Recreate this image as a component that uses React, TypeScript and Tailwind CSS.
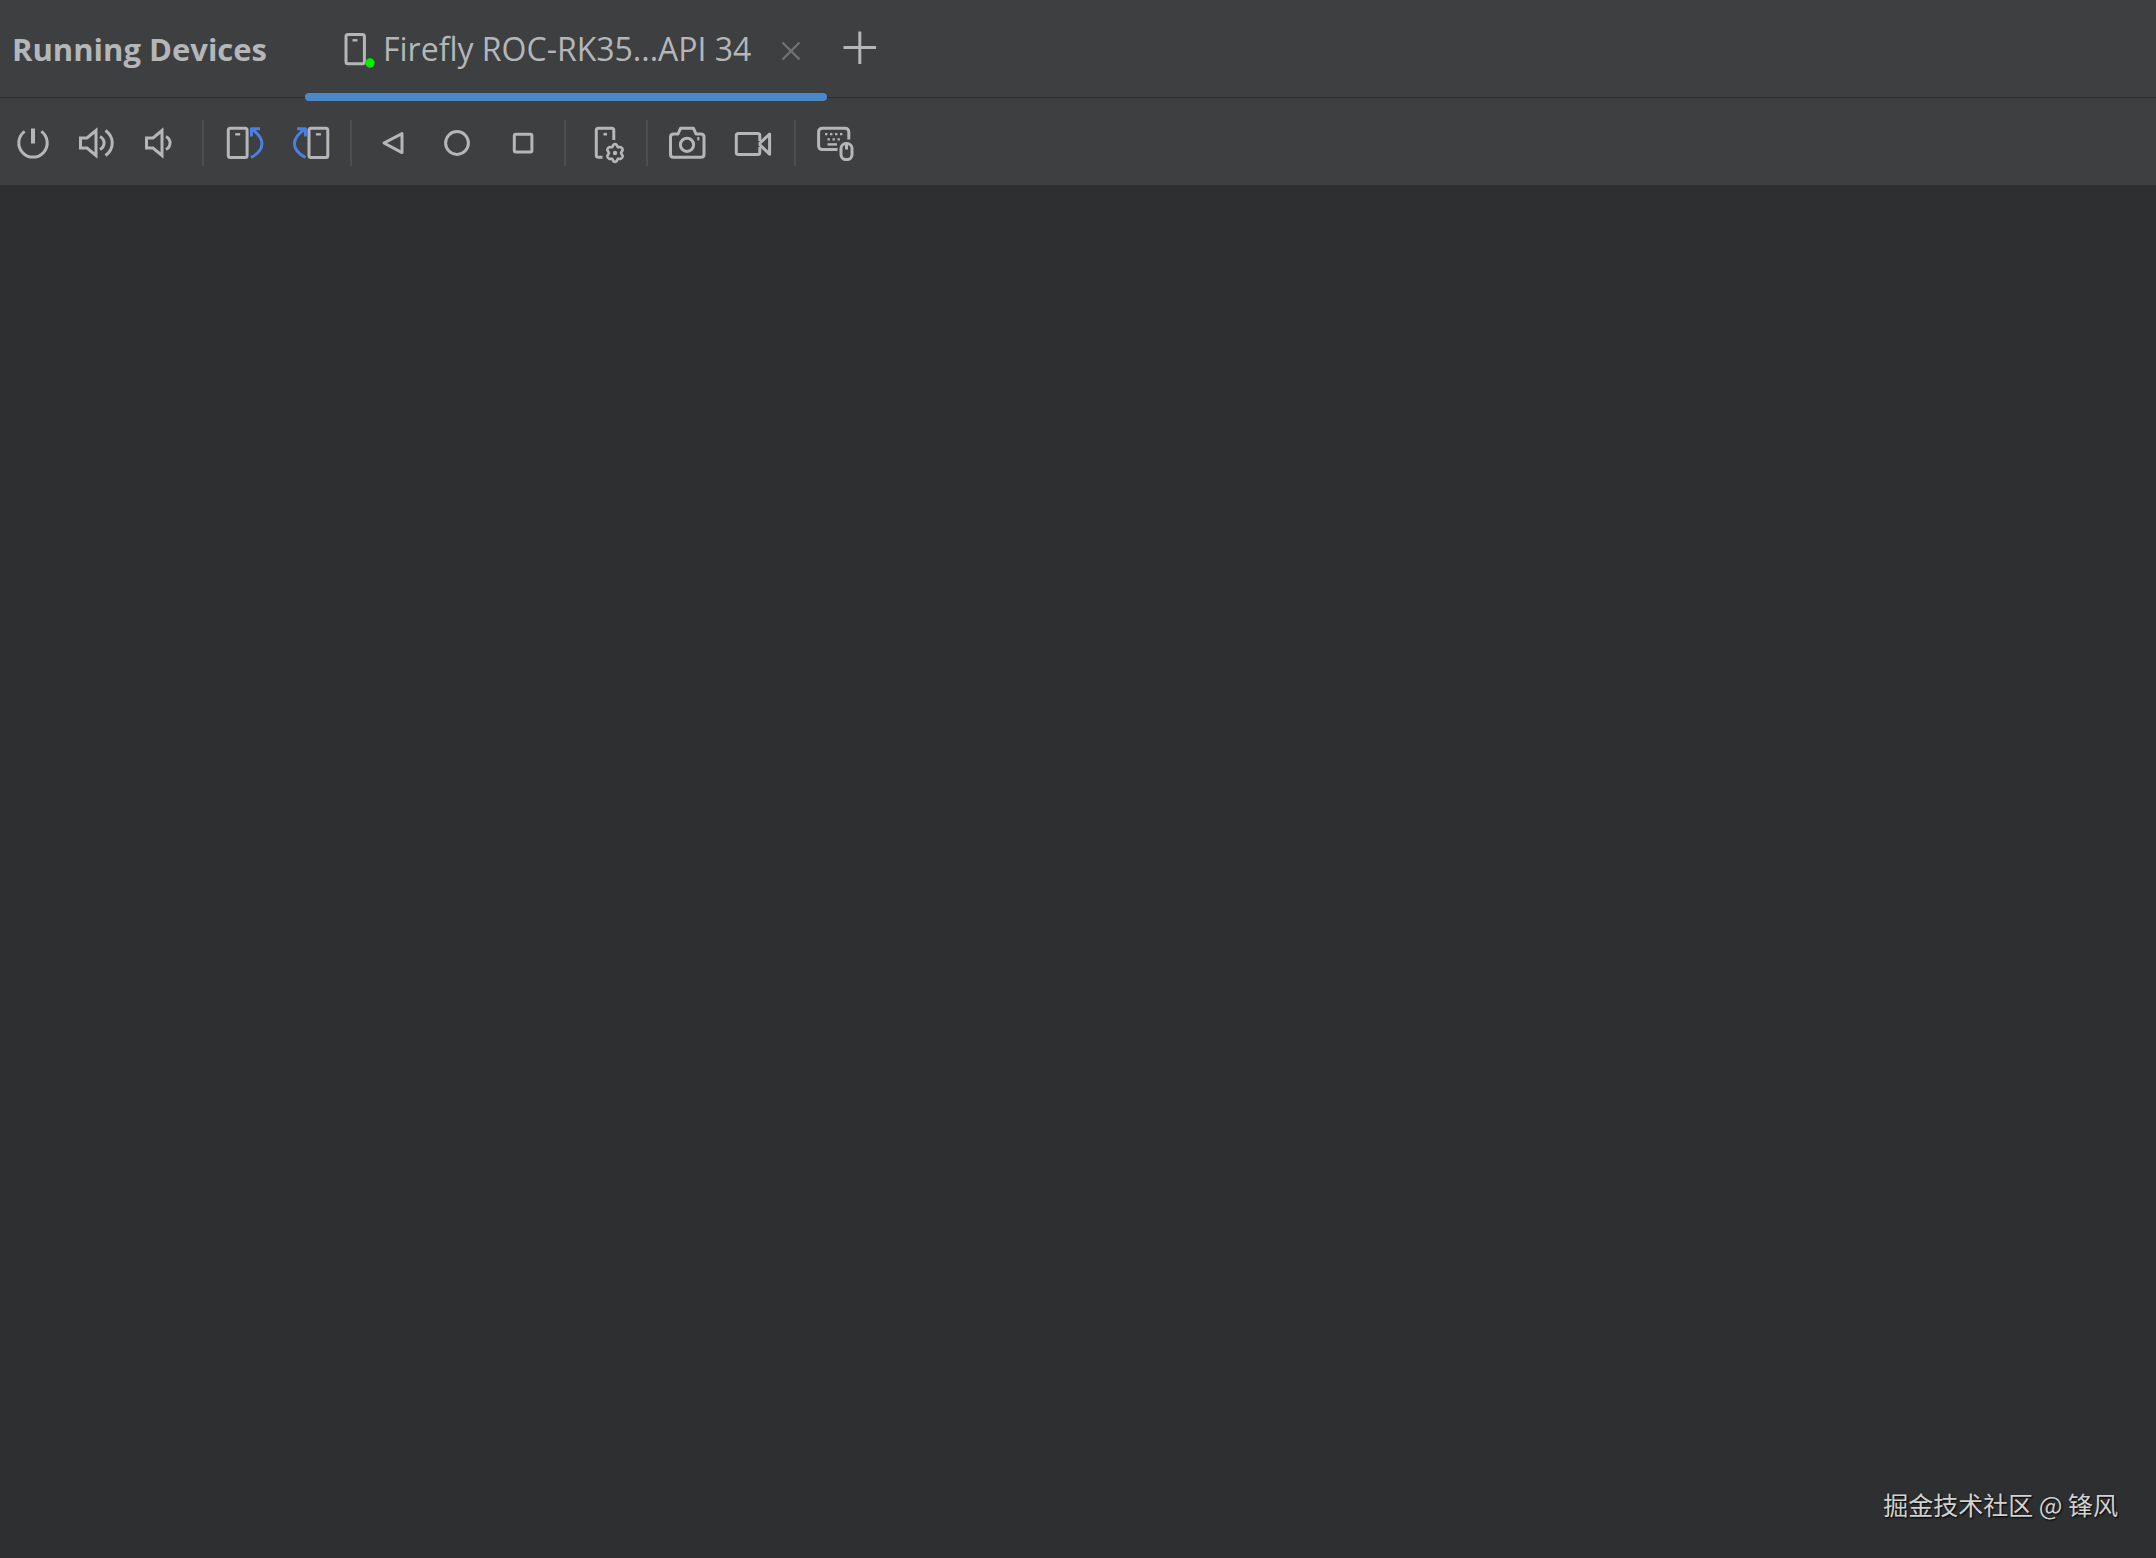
import type { ReactNode } from 'react';

type IconProps = {
  children: ReactNode;
};

function Icon({ children }: IconProps) {
  return (
    <svg
      viewBox="0 0 36 36"
      className="size-9 shrink-0 overflow-visible"
      fill="none"
      stroke="currentColor"
      strokeWidth="3"
      strokeLinejoin="round"
      aria-hidden="true"
    >
      {children}
    </svg>
  );
}

const speaker = <path d="M2.5 13H9L18 5.5V30.5L9 23H2.5Z" strokeLinejoin="miter" />;

const groups: Array<Array<{ label: string; icon: ReactNode }>> = [
  [
    {
      label: 'Power',
      icon: (
        <>
          <path d="M12.7 6.4A14.2 14.2 0 1 0 29.3 6.4" />
          <path d="M21 3.5V18.5" strokeWidth="4" />
        </>
      ),
    },
    {
      label: 'Volume Up',
      icon: (
        <>
          {speaker}
          <path d="M22 11.5C27.4 14.5 27.4 21.5 22 24.5M27.5 5.5C36.5 12 36.5 24 27.5 30.5" />
        </>
      ),
    },
    {
      label: 'Volume Down',
      icon: (
        <>
          {speaker}
          <path d="M22 11.5C27.4 14.5 27.4 21.5 22 24.5" />
        </>
      ),
    },
  ],
  [
    {
      label: 'Rotate Left',
      icon: (
        <>
          <rect x="2.3" y="3.3" width="18.8" height="29.2" rx="2" />
          <path d="M9.2 9.3H14.2" strokeWidth="2.4" />
          <path d="M34 3.8H25.4V11.5M25.5 4C39.5 13 39.5 25 25 32.5" stroke="#4a80e4" />
        </>
      ),
    },
    {
      label: 'Rotate Right',
      icon: (
        <>
          <rect x="17" y="3.3" width="18.8" height="29.2" rx="2" />
          <path d="M23.9 9.3H28.9" strokeWidth="2.4" />
          <path d="M5 3.8H13.4V11.5M13.3 4C-1.2 13 -1.2 25 13.5 32.5" stroke="#4a80e4" />
        </>
      ),
    },
  ],
  [
    { label: 'Back', icon: <path d="M10 18L28 8.6V27.6Z" /> },
    { label: 'Home', icon: <circle cx="17" cy="18" r="11.4" /> },
    { label: 'Overview', icon: <rect x="8.3" y="9.2" width="17.6" height="17.8" rx="1.5" /> },
  ],
  [
    {
      label: 'Device UI Settings',
      icon: (
        <>
          <path d="M25.8 15V5.3Q25.8 3.3 23.8 3.3H10.3Q8.3 3.3 8.3 5.3V30.3Q8.3 32.3 10.3 32.3H14.5" />
          <path d="M15.5 9.2H19" strokeWidth="2.6" />
          <path
            d="M25.4 19.8Q27 18.6 28.6 19.8L29.8 22.2L32.8 22.1Q34.8 23.2 34.7 25L33 28L34.7 31Q34.8 32.8 32.8 33.9L29.8 33.8L28.6 36.2Q27 37.4 25.4 36.2L24.2 33.8L21.2 33.9Q19.2 32.8 19.3 31L21 28L19.3 25Q19.2 23.2 21.2 22.1L24.2 22.2Z"
            strokeWidth="2.6"
          />
          <circle cx="27" cy="28" r="2.2" fill="currentColor" stroke="none" />
        </>
      ),
    },
  ],
  [
    {
      label: 'Take Screenshot',
      icon: (
        <>
          <path d="M8 9L10.5 3.3H23.5L26 9H31Q34 9 34 12V29.3Q34 32.3 31 32.3H3.5Q.5 32.3 .5 29.3V12Q.5 9 3.5 9Z" />
          <circle cx="17" cy="19.8" r="6.6" />
          <path d="M28.3 12V15.4" strokeWidth="2" />
        </>
      ),
    },
    {
      label: 'Record Screen',
      icon: (
        <>
          <path d="M23.8 16V10.5Q23.8 8.5 21.8 8.5H2.3Q.3 8.5 .3 10.5V27.5Q.3 29.5 2.3 29.5H21.8Q23.8 29.5 23.8 27.5V22" />
          <path d="M24 18L33.6 9V29.2L24 20Z" />
        </>
      ),
    },
  ],
  [
    {
      label: 'Hardware Input',
      icon: (
        <>
          <path d="M19.5 24.5H4.6Q.6 24.5 .6 20.5V7.3Q.6 3.3 4.6 3.3H26.8Q30.8 3.3 30.8 7.3V14.5" />
          <path d="M7 9.2H9.4M12 9.2H14.4M17 9.2H19.4M22 9.2H24.4M9.5 14.3H11.9M14.5 14.3H16.9M19.5 14.3H21.9" strokeWidth="2.2" />
          <path d="M9.5 19.4H19" strokeWidth="2.4" />
          <rect x="23" y="18.6" width="11" height="16" rx="5" />
          <path d="M28.5 18.6V24.5" />
        </>
      ),
    },
  ],
];

function TabBar() {
  return (
    <header className="flex h-[98px] items-stretch border-b border-[#2c2e30]">
      <h1 className="w-[305px] shrink-0 pl-3 pt-[27px] text-[31px] leading-[44px] font-bold">
        Running Devices
      </h1>
      <div className="relative flex w-[522px] shrink-0 items-start pl-[38px] pt-[27px]">
        <button type="button" className="flex gap-1 whitespace-nowrap">
          <span className="mt-[5px]">
            <Icon>
              <rect x="3" y="2.6" width="18.4" height="29.2" rx="2" />
              <path d="M9.5 8.3H14.5" strokeWidth="2.4" />
              <circle cx="27" cy="31" r="4.7" fill="#00ee00" stroke="none" />
            </Icon>
          </span>
          <span className="text-[32px] leading-[44px]">Firefly ROC-RK35...API 34</span>
        </button>
        <button type="button" aria-label="Close tab" className="ml-auto mr-[18px] mt-[5px] text-[#6f7173]">
          <Icon>
            <path d="M9.5 10.5L26.5 27.5M26.5 10.5L9.5 27.5" strokeWidth="2.4" />
          </Icon>
        </button>
        <span className="absolute inset-x-0 -bottom-1 h-2 rounded-full bg-[#4a88c7]" />
      </div>
      <button type="button" aria-label="New tab" className="ml-[15px] mt-[29px] self-start">
        <Icon>
          <path d="M1.5 18.5H34M17.8 2.5V35" />
        </Icon>
      </button>
    </header>
  );
}

function Toolbar() {
  return (
    <div role="toolbar" aria-label="Device controls" className="flex pl-3 pt-[22px] pb-[19px]">
      {groups.map((group, index) => (
        <div key={group[0].label} className="flex items-center">
          {index > 0 && <span className="mx-[22px] h-[46px] w-[2px] bg-[#4b4d4f]" />}
          <div className="flex gap-[30px]">
            {group.map(({ label, icon }) => (
              <button key={label} type="button" aria-label={label}>
                <Icon>{icon}</Icon>
              </button>
            ))}
          </div>
        </div>
      ))}
    </div>
  );
}

export default function App() {
  return (
    <div className="flex min-h-screen flex-col bg-[#2e2f31] font-['Open_Sans','Noto_Sans_CJK_SC',sans-serif] text-[#b4b6b8]">
      <div className="bg-[#3d3f41]">
        <TabBar />
        <Toolbar />
      </div>
      <main className="flex flex-1 items-end justify-end pr-[38px] pb-9">
        <p className="font-['Noto_Sans_CJK_SC',sans-serif] text-[25px] leading-9 text-[#d2d2d2] [text-shadow:1px_1px_2px_#000]">
          掘金技术社区 @ 锋风
        </p>
      </main>
    </div>
  );
}
